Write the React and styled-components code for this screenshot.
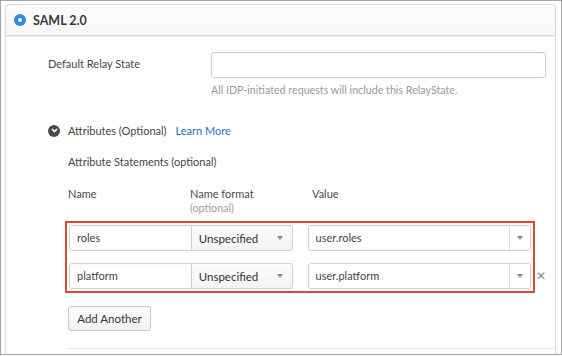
import React from "react";
import styled, { createGlobalStyle } from "styled-components";

const GlobalStyle = createGlobalStyle`
  html, body {
    margin: 0;
    padding: 0;
    background: #ffffff;
  }
  body {
    font-family: Lato, "Liberation Sans", Arial, sans-serif;
    color: #444;
  }
`;

const Frame = styled.div`
  box-sizing: border-box;
  width: 562px;
  height: 355px;
  border: 1px solid #a3a3a3;
  padding: 3px 5px 0 4px;
  overflow: hidden;
`;

const Panel = styled.div`
  border: 1px solid #dcdcdc;
  border-bottom: none;
  border-radius: 4px 4px 0 0;
  height: 100%;
  box-sizing: border-box;
`;

const Header = styled.div`
  display: flex;
  align-items: center;
  gap: 7px;
  height: 30px;
  padding-left: 8px;
  background: linear-gradient(#fdfdfd, #f6f6f6);
  border-bottom: 1px solid #d6d6d6;
  border-radius: 4px 4px 0 0;
  box-shadow: 0 1px 2px rgba(0, 0, 0, 0.08);
`;

const Radio = styled.span`
  width: 12px;
  height: 12px;
  border-radius: 50%;
  background: #2f87f0;
  display: flex;
  align-items: center;
  justify-content: center;
  &::after {
    content: "";
    width: 4px;
    height: 4px;
    border-radius: 50%;
    background: #fff;
  }
`;

const Title = styled.span`
  font-weight: 700;
  font-size: 12.5px;
  color: #3a3a3a;
`;

const Body = styled.div`
  padding: 16px 0 0 42px;
`;

const FieldRow = styled.div`
  display: grid;
  grid-template-columns: 163px 335px;
  align-items: center;
`;

const Label = styled.span`
  font-size: 11px;
  color: #454545;
  margin-top: -3px;
`;

const TextInput = styled.div`
  box-sizing: border-box;
  height: ${(p) => p.$h || 26}px;
  width: ${(p) => (p.$w ? `${p.$w}px` : "auto")};
  border: 1px solid #cfcfcf;
  border-radius: ${(p) => p.$radius || "3px"};
  background: #fff;
  padding: 0 7px 2px;
  display: flex;
  align-items: center;
  font-size: 11px;
  color: #454545;
  box-shadow: inset 0 1px 1px rgba(0, 0, 0, 0.03);
`;

const Help = styled.div`
  grid-column: 2;
  margin-top: 5px;
  font-size: 10.7px;
  color: #9a9a9a;
`;

const Toggle = styled.div`
  display: flex;
  align-items: center;
  margin-top: 28px;
  font-size: 11px;
`;

const Chevron = styled.span`
  width: 12px;
  height: 12px;
  border-radius: 50%;
  background: #4a4a4a;
  display: flex;
  align-items: center;
  justify-content: center;
  margin: 0 8px 0 0;
`;

const ToggleText = styled.span`
  color: #454545;
`;

const Link = styled.span`
  color: #1a73c4;
  margin-left: 9px;
`;

const Section = styled.div`
  padding-left: 20px;
`;

const SubTitle = styled.div`
  margin-top: 18px;
  font-size: 11px;
  color: #454545;
`;

const Columns = styled.div`
  display: grid;
  grid-template-columns: 122px 122px auto;
  margin-top: 19px;
  font-size: 11px;
  color: #4a4a4a;
  line-height: 14px;
`;

const Optional = styled.div`
  color: #a0a0a0;
  font-size: 10.7px;
`;

const Highlight = styled.div`
  margin: 6px 0 0 -3px;
  width: 470px;
  box-sizing: border-box;
  border: 2px solid #e2443a;
  padding: 2px;
  display: flex;
  flex-direction: column;
  gap: 12px;
`;

const AttrRow = styled.div`
  position: relative;
  display: flex;
  align-items: center;
`;

const Select = styled.div`
  box-sizing: border-box;
  height: 26px;
  width: 102px;
  margin-left: -1px;
  border: 1px solid #cfcfcf;
  border-radius: 0 3px 3px 0;
  background: linear-gradient(#fcfcfc, #f3f3f3);
  display: flex;
  align-items: center;
  justify-content: space-between;
  padding: 0 9px 0 7px;
  font-size: 11.5px;
  color: #333;
`;

const Caret = styled.span`
  width: 0;
  height: 0;
  border-left: 3px solid transparent;
  border-right: 3px solid transparent;
  border-top: 4px solid #8a8a8a;
`;

const Combo = styled.div`
  box-sizing: border-box;
  height: 26px;
  width: 224px;
  margin-left: 15px;
  border: 1px solid #cfcfcf;
  border-radius: 3px;
  display: flex;
  align-items: stretch;
  font-size: 11px;
  color: #454545;
`;

const ComboValue = styled.span`
  flex: 1;
  display: flex;
  align-items: center;
  padding: 0 0 2px 7px;
`;

const ComboToggle = styled.span`
  width: 20px;
  border-left: 1px solid #dcdcdc;
  display: flex;
  align-items: center;
  justify-content: center;
`;

const Remove = styled.span`
  position: absolute;
  right: -15px;
  top: 50%;
  transform: translateY(-50%);
  font-size: 12px;
  color: #8c8c8c;
  line-height: 1;
`;

const Button = styled.button`
  margin-top: 13px;
  height: 25px;
  width: 83px;
  border: 1px solid #c8c8c8;
  border-radius: 3px;
  background: linear-gradient(#fdfdfd, #f2f2f2);
  font-family: inherit;
  font-size: 11.5px;
  color: #333;
  padding: 0;
`;

const Divider = styled.div`
  margin-top: 17px;
  border-top: 1px solid #e6e6e6;
`;

const rows = [
  { name: "roles", value: "user.roles", removable: false },
  { name: "platform", value: "user.platform", removable: true },
];

export default function App() {
  return (
    <>
      <GlobalStyle />
      <Frame>
        <Panel>
          <Header>
            <Radio />
            <Title>SAML 2.0</Title>
          </Header>
          <Body>
            <FieldRow>
              <Label>Default Relay State</Label>
              <TextInput $w={335} />
              <Help>All IDP-initiated requests will include this RelayState.</Help>
            </FieldRow>
            <Toggle>
              <Chevron>
                <svg width="7" height="5" viewBox="0 0 7 5">
                  <path d="M1 1 L3.5 3.5 L6 1" fill="none" stroke="#fff" strokeWidth="1.6" />
                </svg>
              </Chevron>
              <ToggleText>Attributes (Optional)</ToggleText>
              <Link>Learn More</Link>
            </Toggle>
            <Section>
              <SubTitle>Attribute Statements (optional)</SubTitle>
              <Columns>
                <span>Name</span>
                <div>
                  Name format
                  <Optional>(optional)</Optional>
                </div>
                <span>Value</span>
              </Columns>
              <Highlight>
                {rows.map((r) => (
                  <AttrRow key={r.name}>
                    <TextInput $w={123} $radius="3px 0 0 3px">
                      {r.name}
                    </TextInput>
                    <Select>
                      Unspecified
                      <Caret />
                    </Select>
                    <Combo>
                      <ComboValue>{r.value}</ComboValue>
                      <ComboToggle>
                        <Caret />
                      </ComboToggle>
                    </Combo>
                    {r.removable && <Remove>✕</Remove>}
                  </AttrRow>
                ))}
              </Highlight>
              <Button>Add Another</Button>
              <Divider />
            </Section>
          </Body>
        </Panel>
      </Frame>
    </>
  );
}
